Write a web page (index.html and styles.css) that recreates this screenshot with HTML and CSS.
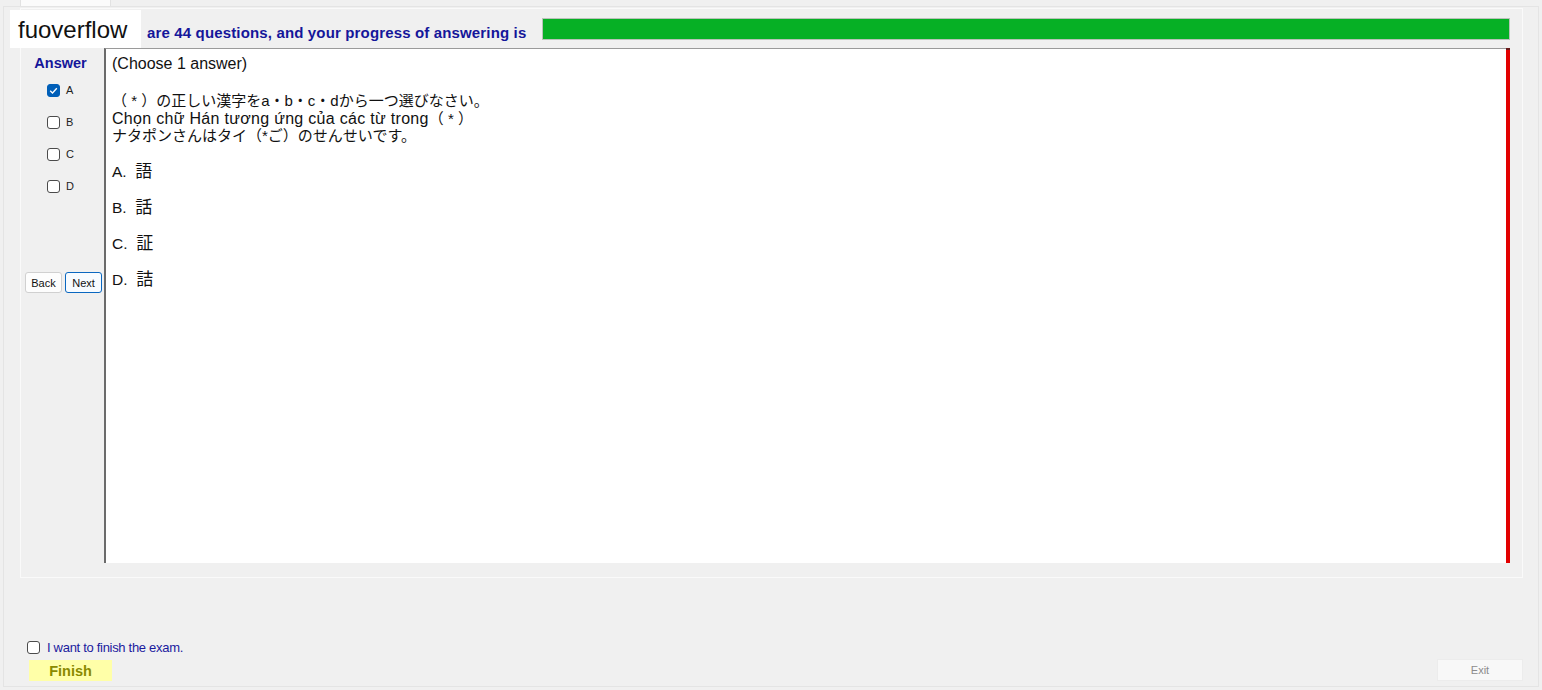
FILE: index.html
```html
<!DOCTYPE html>
<html lang="en">
<head>
<meta charset="utf-8">
<title>Exam</title>
<link rel="stylesheet" href="styles.css">
</head>
<body>
<div class="tabs"><div class="tab"></div></div>
<div class="page">
  <div class="group">
    <div class="head">
      <span class="count">are 44 questions, and your progress of answering is</span>
      <div class="progress"></div>
    </div>
    <div class="main">
      <div class="side">
        <div class="answer-title">Answer</div>
        <ul class="choices">
          <li class="choice"><span class="box checked"><svg viewBox="0 0 13 13" width="13" height="13"><path d="M3.2 6.8 L5.5 9 L9.8 4.2" fill="none" stroke="#fff" stroke-width="1.3"/></svg></span><span class="letter">A</span></li>
          <li class="choice"><span class="box"></span><span class="letter">B</span></li>
          <li class="choice"><span class="box"></span><span class="letter">C</span></li>
          <li class="choice"><span class="box"></span><span class="letter">D</span></li>
        </ul>
        <div class="nav">
          <button class="btn">Back</button>
          <button class="btn btn-focus">Next</button>
        </div>
      </div>
      <div class="question">
        <p class="hint">(Choose 1 answer)</p>
        <p class="stem">（ * ）の正しい漢字をa・b・c・dから一つ選びなさい。<br><span class="vi">Chọn chữ Hán tương ứng của các từ trong</span>（ * ）<br>ナタポンさんはタイ（*ご）のせんせいです。</p>
        <ol class="options">
          <li>A.&nbsp;&nbsp;<span class="kanji">語</span></li>
          <li>B.&nbsp;&nbsp;<span class="kanji">話</span></li>
          <li>C.&nbsp;&nbsp;<span class="kanji">証</span></li>
          <li>D.&nbsp;&nbsp;<span class="kanji">詰</span></li>
        </ol>
      </div>
      <div class="timebar"></div>
    </div>
  </div>
  <div class="footer">
    <div class="finish-area">
      <label class="confirm"><span class="box"></span>I want to finish the exam.</label>
      <button class="finish">Finish</button>
    </div>
    <button class="exit">Exit</button>
  </div>
</div>
<div class="brand">fuoverflow</div>
</body>
</html>
```
FILE: styles.css
```css
* { box-sizing: border-box; }

html, body {
  margin: 0;
  height: 690px;
  overflow: hidden;
}

body {
  background: #f0f0f0;
  font-family: "Liberation Sans", Arial, sans-serif;
  position: relative;
}

/* tab strip above the page */
.tabs {
  height: 6px;
  padding-left: 20px;
}
.tab {
  width: 91px;
  height: 6px;
  background: #fbfbfb;
  border: 1px solid #e2e2e2;
  border-top: none;
  border-bottom: none;
}

.page {
  margin: 0 3px 0 3px;
  height: 681px;
  border: 1px solid #e4e4e4;
  background: #f0f0f0;
  display: flex;
  flex-direction: column;
}

.group {
  margin: 1px 15px 0 16px;
  height: 570px;
  border: 1px solid #fafafa;
  display: flex;
  flex-direction: column;
}

/* header: question count + progress */
.head {
  height: 39px;
  display: flex;
  align-items: flex-start;
}
.count {
  margin: 15px 0 0 126px;
  font-weight: bold;
  font-size: 15px;
  line-height: 17px;
  letter-spacing: 0.15px;
  color: #15169a;
  white-space: nowrap;
}
.progress {
  flex: 1;
  margin: 9px 12px 0 16px;
  height: 22px;
  background: #06b025;
  border: 1px solid #b9c2b9;
}

.main {
  height: 515px;
  display: flex;
  margin-right: 12px;
}

/* answer column */
.side {
  width: 83px;
  display: flex;
  flex-direction: column;
  align-items: center;
}
.answer-title {
  margin-top: 7px;
  font-size: 14.5px;
  font-weight: bold;
  color: #15169a;
  line-height: 17px;
  padding-right: 4px;
}
.choices {
  list-style: none;
  margin: 12px 0 0 0;
  padding: 0 0 0 18px;
  align-self: flex-start;
}
.choice {
  display: flex;
  align-items: center;
  height: 13px;
  margin-bottom: 19px;
  padding-left: 8px;
}
.box {
  display: inline-block;
  width: 13px;
  height: 13px;
  border: 1px solid #4b4b4b;
  border-radius: 3px;
  background: #fff;
  flex: none;
}
.box.checked {
  background: #005fb8;
  border-color: #005fb8;
}
.box svg { display: block; margin: -1px; }
.letter {
  margin-left: 6px;
  font-size: 11px;
  color: #222;
  line-height: 13px;
}

.nav {
  margin-top: 60px;
  display: flex;
  gap: 3px;
  padding-left: 2px;
}
.btn {
  width: 37px;
  height: 21px;
  padding: 0;
  font-family: "Liberation Sans", Arial, sans-serif;
  font-size: 11px;
  color: #111;
  background: #fdfdfd;
  border: 1px solid #d0d0d0;
  border-radius: 3px;
}
.btn-focus {
  border-color: #0a67c0;
  background: #f7fbff;
}

/* question pane */
.question {
  flex: 1;
  background: #fff;
  border-left: 2px solid #6b6b6b;
  border-top: 1px solid #9a9a9a;
  padding: 6px 0 0 6px;
  font-size: 16px;
  color: #111;
}
.hint {
  margin: 0;
  line-height: 18px;
}
.stem {
  margin: 19px 0 0 0;
  font-size: 15px;
  line-height: 17.5px;
  font-family: "Liberation Sans", "Noto Sans CJK JP", sans-serif;
}
.vi {
  font-size: 16px;
  letter-spacing: 0.3px;
}
.options {
  list-style: none;
  margin: 7px 0 0 0;
  padding: 0;
}
.options li {
  height: 36.3px;
  line-height: 36px;
  font-size: 15.5px;
}
.kanji {
  font-family: "Noto Sans CJK JP", sans-serif;
  font-size: 17px;
}

.timebar {
  width: 4px;
  background: #e20000;
  border-top: 2px solid #6a1a1a;
}

/* bottom actions */
.footer {
  flex: 1;
  display: flex;
  justify-content: space-between;
  align-items: flex-end;
  padding: 0 15px 5px 23px;
}
.finish-area {
  display: flex;
  flex-direction: column;
}
.confirm {
  display: flex;
  align-items: center;
  font-size: 13px;
  color: #1a1a9e;
  height: 14px;
  letter-spacing: -0.3px;
}
.confirm .box {
  margin-right: 7px;
}
.finish {
  margin: 6px 0 0 2px;
  width: 83px;
  height: 21px;
  padding: 0;
  border: none;
  background: #ffffa8;
  color: #8a8a00;
  font-family: "Liberation Sans", Arial, sans-serif;
  font-weight: bold;
  font-size: 14.5px;
}
.exit {
  width: 86px;
  height: 22px;
  padding: 0;
  border: 1px solid #ececec;
  background: #f8f8f8;
  color: #8c8c8c;
  font-family: "Liberation Sans", Arial, sans-serif;
  font-size: 11px;
  margin-bottom: 0;
}

/* site label in the corner */
.brand {
  position: absolute;
  left: 10px;
  top: 10px;
  width: 131px;
  height: 38px;
  background: #fff;
  font-size: 24px;
  line-height: 40px;
  padding-left: 8px;
  color: #111;
}
```
